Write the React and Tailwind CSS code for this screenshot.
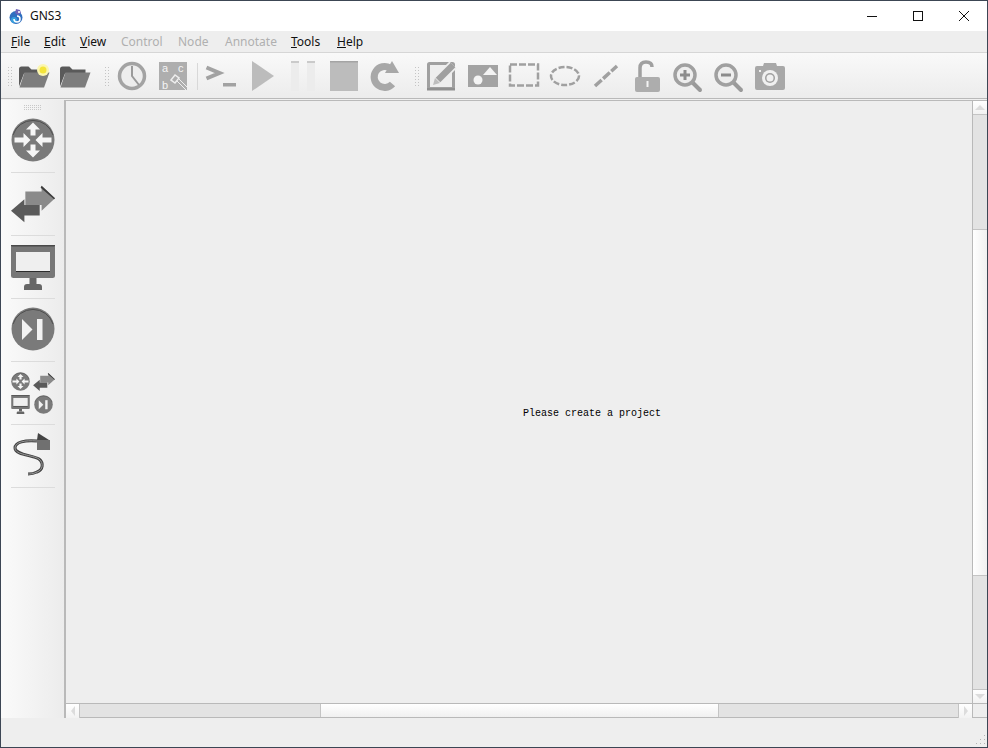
import React from "react";

const menus = [
	{ label: "File", w: "w-[33px]" },
	{ label: "Edit", w: "w-[36px]" },
	{ label: "View", w: "w-[41px]" },
	{ label: "Control", w: "w-[57px]", off: true },
	{ label: "Node", w: "w-[47px]", off: true },
	{ label: "Annotate", w: "w-[66px]", off: true },
	{ label: "Tools", w: "w-[46px]" },
	{ label: "Help", w: "w-[46px]" },
];

function Dots({ cols, rows, step = 3, color = "#c4c4c4" }) {
	const dots = [];
	for (let r = 0; r < rows; r++) {
		for (let c = 0; c < cols; c++) {
			dots.push(<rect key={r + "-" + c} x={c * step} y={r * step} width="1" height="1" fill={color} />);
		}
	}
	return (
		<svg width={(cols - 1) * step + 1} height={(rows - 1) * step + 1} className="block">
			{dots}
		</svg>
	);
}

function Slot({ children }) {
	return (
		<svg width="41" height="40" viewBox="0 0 41 40" className="block shrink-0">
			{children}
		</svg>
	);
}

function FolderIcon({ glow }) {
	return (
		<Slot>
			<path d="M6 13q0-2.500 2.500-2.500h7l3 3h13v4H11l-5 13z" fill="#5a5a5a" />
			<path d="M6.500 31.500l5-15h25l-5.500 15z" fill="#7d7d7d" />
			{glow && <circle cx="30" cy="14" r="6" fill="#fbf6b0" />}
			{glow && <circle cx="30" cy="14" r="3.500" fill="#f4e43a" />}
		</Slot>
	);
}

function RouterGlyph({ size }) {
	return (
		<svg width={size} height={size} viewBox="0 0 44 44" className="block">
			<circle cx="22" cy="22" r="21.500" fill="#7a7a7a" />
			<path d="M2 17A21 21 0 0 1 42 17" fill="none" stroke="#4e4e4e" />
			<path d="M22 4.500l7 7h-4.500v6h-5v-6H15zM22 39.500l-7-7h4.500v-6h5v6H29zM19.500 22l-7 7v-4.500h-9v-5h9V15zM24.500 22l7-7v4.500h9v5h-9V29z" fill="#f6f6f6" />
		</svg>
	);
}

function SwitchGlyph({ w, h }) {
	return (
		<svg width={w} height={h} viewBox="0 0 46 38" className="block">
			<path d="M15 6h17V0l14 13-14 13v-6H15z" fill="#8a8a8a" />
			<path d="M32 0l14 13-1 1-14-12z" fill="#3c3c3c" />
			<path d="M30 20H14v-6L0 26l14 12v-7h16z" fill="#5a5a5a" />
		</svg>
	);
}

function MonitorGlyph({ w, h }) {
	return (
		<svg width={w} height={h} viewBox="0 0 44 45" className="block">
			<rect x="0" y="0" width="44" height="33" rx="2.500" fill="#777" />
			<rect x="0" y="0" width="44" height="1.500" fill="#4a4a4a" />
			<rect x="5" y="7" width="34" height="19" fill="#efefef" />
			<rect x="5" y="26" width="34" height="1" fill="#2c2c2c" />
			<rect x="18.500" y="33" width="7" height="6" fill="#666" />
			<path d="M13 45v-3q0-3 3-3h12q3 0 3 3v3z" fill="#666" />
		</svg>
	);
}

function SkipGlyph({ size }) {
	return (
		<svg width={size} height={size} viewBox="0 0 44 44" className="block">
			<circle cx="22" cy="22" r="21.500" fill="#7a7a7a" />
			<path d="M2 17A21 21 0 0 1 42 17" fill="none" stroke="#4e4e4e" />
			<path d="M11 12l10.500 10.500L11 33z" fill="#f2f2f2" />
			<rect x="26" y="12" width="5.500" height="21" fill="#f2f2f2" />
		</svg>
	);
}

function ZoomIcon({ plus }) {
	return (
		<Slot>
			<path d="M25 26l8 8" stroke="#9a9a9a" strokeWidth="4" strokeLinecap="round" />
			<circle cx="18" cy="19" r="10" fill="#eee" stroke="#a0a0a0" strokeWidth="3.500" />
			<rect x="13" y="17.500" width="10" height="3" fill="#8c8c8c" />
			{plus && <rect x="16.500" y="14" width="3" height="10" fill="#8c8c8c" />}
		</Slot>
	);
}

function Handle({ ml }) {
	return (
		<div className={`shrink-0 self-start mt-[11px] ${ml}`}>
			<Dots cols={2} rows={7} />
		</div>
	);
}

function Toolbar() {
	return (
		<div className="flex h-[46px] shrink-0 pt-[3px] bg-gradient-to-b from-[#f9f9f9] to-[#ececec] border-b border-[#b9b9b9] pl-[7px]">
			<Handle ml="ml-0" />
			<div className="ml-px flex">
				<FolderIcon glow />
				<FolderIcon />
			</div>
			<Handle ml="ml-[10px]" />
			<div className="ml-[3px] flex">
				<Slot>
					<circle cx="20" cy="20" r="12.500" fill="#ededed" stroke="#a3a3a3" strokeWidth="3.500" />
					<path d="M20 10v10l7 9" fill="none" stroke="#9a9a9a" strokeWidth="2" />
				</Slot>
				<Slot>
					<rect x="6" y="6" width="28" height="28" fill="#aeaeae" />
					<text x="9" y="16" fontSize="11" fill="#f4f4f4" fontFamily="Liberation Sans, sans-serif">a</text>
					<text x="25" y="16" fontSize="11" fill="#f4f4f4" fontFamily="Liberation Sans, sans-serif">c</text>
					<text x="9" y="33" fontSize="11" fill="#f4f4f4" fontFamily="Liberation Sans, sans-serif">b</text>
					<path d="M18 24l4-5 4 3-4 5z" fill="#aeaeae" stroke="#eee" strokeWidth="1.500" />
					<path d="M24 25l9 9M26 23l8 8" stroke="#eee" strokeWidth="1" />
				</Slot>
			</div>
			<div className="ml-[3px] mr-[2px] mt-[7px] w-px h-[27px] bg-[#d8d8d8] shrink-0" />
			<div className="flex">
				<Slot>
					<path d="M6.500 11.500l13 5.500-13 5.500" fill="none" stroke="#a2a2a2" strokeWidth="4" />
					<rect x="23" y="27" width="13" height="3.500" fill="#a2a2a2" />
				</Slot>
				<Slot>
					<path d="M11 5l22 15-22 15z" fill="#bcbcbc" />
				</Slot>
				<Slot>
					<rect x="9" y="5" width="8" height="30" fill="#ececec" />
					<rect x="25" y="5" width="8" height="30" fill="#ececec" />
					<rect x="9" y="5" width="8" height="2" fill="#cacaca" />
					<rect x="25" y="5" width="8" height="2" fill="#cacaca" />
				</Slot>
				<Slot>
					<rect x="7" y="5" width="28" height="30" fill="#bcbcbc" />
					<rect x="7" y="5" width="28" height="1.500" fill="#a4a4a4" />
				</Slot>
				<Slot>
					<path d="M28.500 28A10.500 10.500 0 1 1 26 12" fill="none" stroke="#a8a8a8" strokeWidth="7" />
					<path d="M28 5l7 12H21z" fill="#a8a8a8" />
				</Slot>
			</div>
			<Handle ml="ml-[10px]" />
			<div className="ml-[2px] flex">
				<Slot>
					<rect x="7.500" y="7.500" width="25" height="25" rx="1" fill="#eee" stroke="#a0a0a0" strokeWidth="3" />
					<rect x="6" y="32" width="28" height="2.500" fill="#909090" />
					<path d="M16 25L32 9" stroke="#eee" strokeWidth="10" />
					<path d="M17 24L32 9" stroke="#a0a0a0" strokeWidth="6.500" />
					<path d="M12 29l2-7 5 5z" fill="#bdbdbd" />
				</Slot>
				<Slot>
					<rect x="6" y="9" width="30" height="22" fill="#a3a3a3" />
					<circle cx="16" cy="24" r="4.500" fill="#f4f4f4" />
					<path d="M28 11l7 8H21z" fill="#f4f4f4" />
				</Slot>
				<Slot>
					<rect x="7" y="8.500" width="28" height="21" fill="none" stroke="#a0a0a0" strokeWidth="2.500" strokeDasharray="7 2" />
				</Slot>
				<Slot>
					<ellipse cx="21" cy="20" rx="14" ry="9" fill="none" stroke="#a0a0a0" strokeWidth="2.500" strokeDasharray="6 2" />
				</Slot>
				<Slot>
					<path d="M10 30l22-20" stroke="#a0a0a0" strokeWidth="3.500" strokeDasharray="9 2" />
				</Slot>
				<Slot>
					<path d="M14 21V12q0-6 6-6t6 5" fill="none" stroke="#a0a0a0" strokeWidth="3.500" />
					<rect x="9" y="21" width="25" height="15" rx="2" fill="#adadad" />
					<rect x="20.500" y="25" width="2" height="6" fill="#f4f4f4" />
				</Slot>
				<ZoomIcon plus />
				<ZoomIcon />
				<Slot>
					<path d="M6 12q0-2 2-2h6l1-3h12l1 3h6q2 0 2 2v20q0 2-2 2H8q-2 0-2-2z" fill="#a8a8a8" />
					<circle cx="21" cy="22" r="8" fill="#f0f0f0" />
					<circle cx="21" cy="22" r="5" fill="#a0a0a0" />
					<circle cx="21" cy="22" r="3.500" fill="#f0f0f0" />
					<rect x="10" y="14" width="2" height="2" fill="#f0f0f0" />
				</Slot>
			</div>
		</div>
	);
}

function DockCell({ children, up }) {
	return (
		<div className={`h-[63px] w-[44px] flex items-center justify-center border-b border-[#dcdcdc] ${up ? "pb-[2px]" : ""}`}>
			{children}
		</div>
	);
}

function Dock() {
	return (
		<div className="w-[63px] shrink-0 bg-gradient-to-r from-[#fafafa] to-[#ececec] flex flex-col items-center pt-[5px]">
			<Dots cols={9} rows={3} step={2} color="#c8c8c8" />
			<div className="w-[44px]">
				<DockCell up>
					<RouterGlyph size={44} />
				</DockCell>
				<DockCell>
					<SwitchGlyph w={46} h={38} />
				</DockCell>
				<DockCell>
					<MonitorGlyph w={44} h={45} />
				</DockCell>
				<DockCell up>
					<SkipGlyph size={44} />
				</DockCell>
				<DockCell>
					<div className="grid grid-cols-[19px_22px] gap-x-[3px] gap-y-[4px] items-center justify-items-center w-[44px]">
						<RouterGlyph size={19} />
						<SwitchGlyph w={22} h={18} />
						<MonitorGlyph w={19} h={19} />
						<SkipGlyph size={19} />
					</div>
				</DockCell>
				<DockCell>
					<svg width="44" height="48" viewBox="0 0 44 48" className="block">
						<path d="M26 9C14 8 4 10 4 16c0 7 18 7 24 11 5 4 4 11-2 13-4 2-7 2-9 2" fill="none" stroke="#444" strokeWidth="3" />
						<path d="M26 9C14 8 4 10 4 16c0 7 18 7 24 11 5 4 4 11-2 13-4 2-7 2-9 2" fill="none" stroke="#999" strokeWidth="1" />
						<path d="M27 1l11 7H26z" fill="#444" />
						<rect x="26" y="8" width="13" height="10" fill="#707070" />
					</svg>
				</DockCell>
			</div>
		</div>
	);
}

function ScrollBtn({ children, cls = "" }) {
	return (
		<div className={`w-[14px] h-[14px] shrink-0 bg-gradient-to-b from-white to-[#f2f2f2] flex items-center justify-center ${cls}`}>
			{children}
		</div>
	);
}

function Canvas() {
	return (
		<div className="flex-1 min-w-0 flex flex-col border-l-2 border-t border-b border-[#b9b9b9]">
			<div className="flex-1 min-h-0 flex">
				<div className="relative flex-1 bg-[#eeeeee]">
					<span className="absolute left-[457px] top-[306px] text-[10px] leading-[14px] text-black whitespace-nowrap font-['Liberation_Mono',monospace]">
						Please create a project
					</span>
				</div>
				<div className="w-[15px] shrink-0 flex flex-col border-l border-[#b9b9b9]">
					<ScrollBtn cls="border-b border-[#c4c4c4]">
						<div className="w-0 h-0 border-x-[5px] border-x-transparent border-b-[5px] border-b-[#dcdcdc]" />
					</ScrollBtn>
					<div className="h-[114px] bg-[#e3e3e3]" />
					<div className="h-[347px] bg-gradient-to-r from-white to-[#f0f0f0] border-y border-[#c4c4c4]" />
					<div className="flex-1 bg-[#e3e3e3]" />
					<ScrollBtn cls="border-t border-[#c4c4c4]">
						<div className="w-0 h-0 border-x-[5px] border-x-transparent border-t-[5px] border-t-[#dcdcdc]" />
					</ScrollBtn>
				</div>
			</div>
			<div className="h-[14px] shrink-0 flex border-t border-[#b9b9b9]">
				<ScrollBtn cls="border-r border-[#c4c4c4] h-[13px]">
					<div className="w-0 h-0 border-y-[5px] border-y-transparent border-r-[4px] border-r-[#dcdcdc]" />
				</ScrollBtn>
				<div className="w-[240px] bg-[#e3e3e3]" />
				<div className="w-[399px] bg-gradient-to-b from-white to-[#f0f0f0] border-x border-[#c4c4c4]" />
				<div className="flex-1 bg-[#e3e3e3]" />
				<ScrollBtn cls="border-l border-[#c4c4c4] h-[13px]">
					<div className="w-0 h-0 border-y-[5px] border-y-transparent border-l-[4px] border-l-[#dcdcdc]" />
				</ScrollBtn>
				<div className="w-[15px] shrink-0 border-l border-[#b9b9b9] bg-[#eeeeee]" />
			</div>
		</div>
	);
}

export default function App() {
	return (
		<div className="w-[988px] h-[748px] flex flex-col bg-[#eeeeee] border border-[#3c4654] font-['Noto_Sans',sans-serif] overflow-hidden">
			{/* title bar */}
			<div className="h-[30px] shrink-0 bg-white flex items-center pl-[7px]">
				<svg width="17" height="17" viewBox="0 0 17 17" className="block">
					<circle cx="8" cy="9.500" r="6.500" fill="#2f6fc0" />
					<circle cx="6" cy="12" r="3" fill="#39a0dd" />
					<path d="M8 1l4 1 1 3-3 2-3-2z" fill="#6f63b8" />
					<circle cx="11" cy="4" r="1" fill="#fff" />
					<path d="M9 8a3 3 0 1 1-3 3" fill="none" stroke="#fff" strokeWidth="1.500" />
				</svg>
				<span className="ml-[5px] text-[12px] text-[#111]">GNS3</span>
				<div className="ml-auto flex items-center">
					<svg width="12" height="12" viewBox="0 0 12 12" className="block mr-[34px]">
						<path d="M1 6.500h10" stroke="#111" />
					</svg>
					<svg width="12" height="12" viewBox="0 0 12 12" className="block mr-[34px]">
						<rect x="1.500" y="1.500" width="9" height="9" fill="none" stroke="#111" />
					</svg>
					<svg width="12" height="12" viewBox="0 0 12 12" className="block mr-[17px]">
						<path d="M1 1l10 10M11 1L1 11" stroke="#111" />
					</svg>
				</div>
			</div>
			{/* menu bar */}
			<div className="h-[22px] shrink-0 flex items-center pl-[10px] bg-[#eeeeee] border-b border-[#d6d6d6] text-[12px]">
				{menus.map((m) => (
					<div key={m.label} className={`${m.w} shrink-0 ${m.off ? "text-[#b0b0b0]" : "text-[#111]"}`}>
						{m.off ? (
							m.label
						) : (
							<>
								<span className="underline">{m.label[0]}</span>
								{m.label.slice(1)}
							</>
						)}
					</div>
				))}
			</div>
			<Toolbar />
			<div className="h-px shrink-0 bg-[#f0f0f0]" />
			{/* main area */}
			<div className="h-[618px] shrink-0 flex">
				<Dock />
				<Canvas />
			</div>
			{/* status bar */}
			<div className="flex-1 flex justify-end items-end pr-[1px] pb-[1px]">
				<svg width="11" height="11" viewBox="0 0 11 11" className="block">
					<path d="M9 0h1v1H9zM5 4h1v1H5zM9 4h1v1H9zM1 8h1v1H1zM5 8h1v1H5zM9 8h1v1H9z" fill="#b4b4b4" />
				</svg>
			</div>
		</div>
	);
}
